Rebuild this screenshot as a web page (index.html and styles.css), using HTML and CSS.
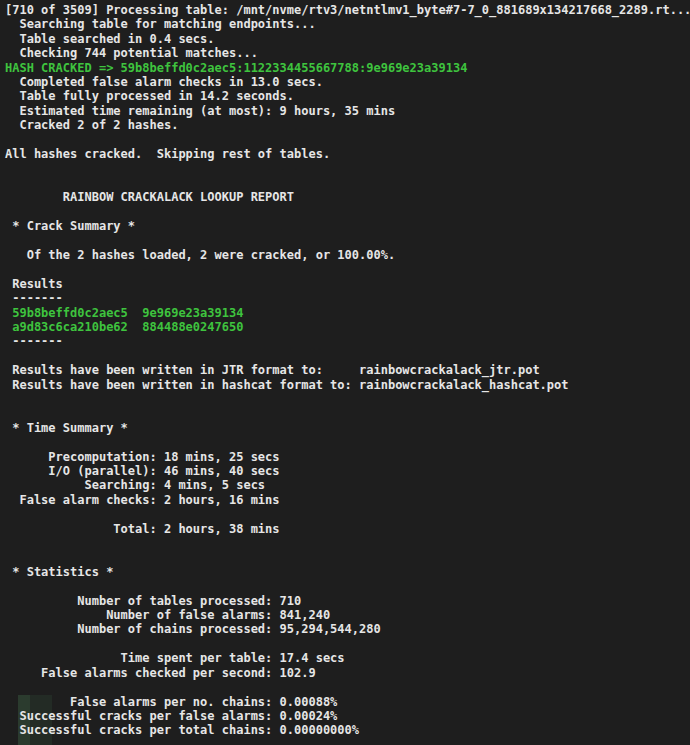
FILE: index.html
```html
<!DOCTYPE html>
<html>
<head>
<meta charset="utf-8">
<link rel="stylesheet" href="styles.css">
</head>
<body>
<div class="term">
<pre class="out">[710 of 3509] Processing table: /mnt/nvme/rtv3/netntlmv1_byte#7-7_0_881689x134217668_2289.rt...
  Searching table for matching endpoints...
  Table searched in 0.4 secs.
  Checking 744 potential matches...
<span class="g">HASH CRACKED =&gt; 59b8beffd0c2aec5:1122334455667788:9e969e23a39134</span>
  Completed false alarm checks in 13.0 secs.
  Table fully processed in 14.2 seconds.
  Estimated time remaining (at most): 9 hours, 35 mins
  Cracked 2 of 2 hashes.

All hashes cracked.  Skipping rest of tables.


        RAINBOW CRACKALACK LOOKUP REPORT

 * Crack Summary *

   Of the 2 hashes loaded, 2 were cracked, or 100.00%.

 Results
 -------
<span class="g"> 59b8beffd0c2aec5  9e969e23a39134
 a9d83c6ca210be62  884488e0247650</span>
 -------

 Results have been written in JTR format to:     rainbowcrackalack_jtr.pot
 Results have been written in hashcat format to: rainbowcrackalack_hashcat.pot


 * Time Summary *

      Precomputation: 18 mins, 25 secs
      I/O (parallel): 46 mins, 40 secs
           Searching: 4 mins, 5 secs
  False alarm checks: 2 hours, 16 mins

               Total: 2 hours, 38 mins


 * Statistics *

          Number of tables processed: 710
              Number of false alarms: 841,240
          Number of chains processed: 95,294,544,280

                Time spent per table: 17.4 secs
     False alarms checked per second: 102.9

         False alarms per no. chains: 0.00088%
  Successful cracks per false alarms: 0.00024%
  Successful cracks per total chains: 0.00000000%</pre>
<div class="wm" aria-hidden="true"><span class="wm-bar"></span><span class="wm-box"></span></div>
</div>
</body>
</html>
```
FILE: styles.css
```css
html, body {
  margin: 0;
  padding: 0;
  background: #1e1e1e;
  width: 690px;
  height: 745px;
  overflow: hidden;
}
.term {
  position: relative;
  width: 690px;
  height: 745px;
  padding: 3px 0 0 5px;
  box-sizing: border-box;
  overflow: hidden;
}
.out {
  margin: 0;
  font-family: "DejaVu Sans Mono", "Liberation Mono", monospace;
  font-weight: bold;
  font-size: 12px;
  line-height: 14.4px;
  color: #e6e6e6;
  white-space: pre;
  position: relative;
  z-index: 1;
}
.g {
  color: #3ec43e;
}
.wm {
  position: absolute;
  left: 18px;
  top: 695px;
  width: 42px;
  height: 50px;
  z-index: 0;
}
.wm-bar {
  position: absolute;
  left: 0;
  top: 0;
  width: 12px;
  height: 50px;
  background: rgba(70, 120, 80, 0.32);
}
.wm-box {
  position: absolute;
  left: 12px;
  top: 0;
  width: 22px;
  height: 50px;
  background: rgba(70, 120, 80, 0.15);
}
```
